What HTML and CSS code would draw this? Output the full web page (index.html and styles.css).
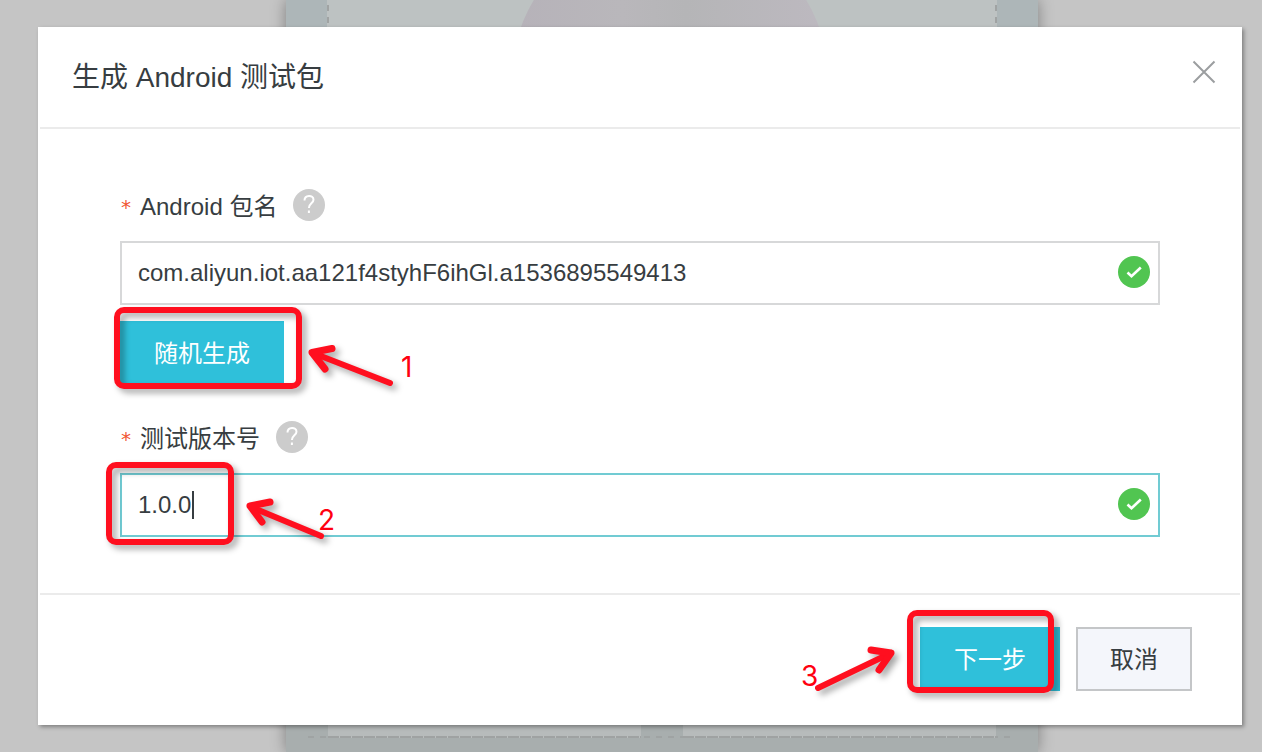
FILE: index.html
```
<!DOCTYPE html>
<html lang="zh-CN">
<head>
    <meta charset="UTF-8">
    <meta name="viewport" content="width=device-width, initial-scale=1.0">
    <title>生成 Android 测试包</title>
    <link rel="stylesheet" href="styles.css">
</head>
<body>
    <div class="scene">
        <div class="scene-top">
            <svg class="ball" viewBox="0 0 320 48" aria-hidden="true">
                <defs>
                    <linearGradient id="ballFill">
                        <stop offset="0" stop-color="#b6b2b9"/>
                        <stop offset="0.35" stop-color="#b9b7bb"/>
                        <stop offset="0.55" stop-color="#b5b5b7"/>
                        <stop offset="1" stop-color="#bdb9c0"/>
                    </linearGradient>
                </defs>
                <circle cx="168" cy="82" r="159" fill="url(#ballFill)"/>
            </svg>
        </div>
        <div class="scene-bottom">
            <div class="slot"></div>
            <div class="slot"></div>
        </div>
    </div>

    <div class="dialog" role="dialog" aria-labelledby="title">
        <div class="dialog-header">
            <h2 id="title">生成 Android 测试包</h2>
            <button class="close" type="button" aria-label="关闭">
                <svg width="24" height="24" viewBox="0 0 24 24"><path d="M1.5 1.5 22.5 22.5M22.5 1.5 1.5 22.5"/></svg>
            </button>
        </div>

        <form class="dialog-body">
            <div class="label-row">
                <span class="required">*</span>
                <label for="package_name">Android 包名</label>
                <svg class="help" viewBox="0 0 32 32"><circle cx="16" cy="16" r="16"/><path d="M11.5 11.5c0-6 9-6 9-.8 0 3.6-4.6 3.8-4.6 8.3"/><path d="M15.9 21.5v2.5"/></svg>
            </div>
            <div class="field">
                <input type="text" id="package_name" value="com.aliyun.iot.aa121f4styhF6ihGl.a1536895549413">
                <svg class="ok" viewBox="0 0 32 32"><circle cx="16" cy="16" r="16"/><path d="M9.5 16.5 13.5 20.3 22.8 11.5"/></svg>
            </div>
            <div class="marked random">
                <button class="primary" type="button">随机生成</button>
                <svg class="mark mark-random" width="330" height="110">
                    <rect x="17" y="10" width="182" height="76" rx="7"/>
                    <g>
                        <path d="M290 83 213 53"/>
                        <path class="head" d="M232 48.500 212 52.500 225 69"/>
                    </g>
                    <text x="301" y="77">1</text>
                </svg>
            </div>

            <div class="label-row">
                <span class="required">*</span>
                <label for="version">测试版本号</label>
                <svg class="help" viewBox="0 0 32 32"><circle cx="16" cy="16" r="16"/><path d="M11.5 11.5c0-6 9-6 9-.8 0 3.6-4.6 3.8-4.6 8.3"/><path d="M15.9 21.5v2.5"/></svg>
            </div>
            <div class="field active marked">
                <input type="text" id="version" value="1.0.0">
                <span class="caret"></span>
                <svg class="ok" viewBox="0 0 32 32"><circle cx="16" cy="16" r="16"/><path d="M9.5 16.5 13.5 20.3 22.8 11.5"/></svg>
                <svg class="mark mark-version" width="330" height="110">
                    <rect x="9" y="12" width="122" height="77" rx="7"/>
                    <g>
                        <path d="M221 83 151 54"/>
                        <path class="head" d="M170 49 150 53 162 69"/>
                    </g>
                    <text x="218" y="77">2</text>
                </svg>
            </div>
        </form>

        <div class="dialog-footer">
            <div class="marked">
                <button class="primary" type="button">下一步</button>
                <svg class="mark mark-next" width="280" height="110">
                    <rect x="120" y="13" width="141" height="77" rx="7"/>
                    <g>
                        <path d="M28 88 101 53"/>
                        <path class="head" d="M81 50 101 53 89 70"/>
                    </g>
                    <text x="11" y="86">3</text>
                </svg>
            </div>
            <button class="cancel" type="button">取消</button>
        </div>
    </div>
</body>
</html>
```
FILE: styles.css
```
* {
    box-sizing: border-box;
}
body {
    margin: 0;
    display: flow-root;
    position: relative;
    min-height: 100vh;
    background-color: #c5c5c5;
    color: #373d41;
    font-family: "Liberation Sans", "Noto Sans CJK SC", sans-serif;
    font-size: 24px;
    overflow-x: hidden;
}

/* page behind the dialog */
.scene {
    position: absolute;
    top: 0;
    bottom: 0;
    left: calc(50% - 345px);
    width: 752px;
    display: flex;
    flex-direction: column;
    justify-content: space-between;
    background: linear-gradient(#adb6b8 50%, #a8aeae 50%);
    box-shadow: 0 0 14px rgba(0, 0, 0, 0.35);
    overflow: hidden;
}
.scene-top {
    height: 48px;
    margin: 0 41px;
    background:
        repeating-linear-gradient(transparent 0 5px, #a0a3a3 5px 11px, transparent 11px 12px) left / 2px 100% no-repeat,
        repeating-linear-gradient(transparent 0 5px, #a0a3a3 5px 11px, transparent 11px 12px) right / 2px 100% no-repeat,
        #bdc2c2;
}
.ball {
    display: block;
    width: 320px;
    height: 48px;
    margin: 0 auto;
    overflow: visible;
}
.scene-bottom {
    display: flex;
    gap: 42px;
    margin: 0 22px 14px;
    padding: 0 20px;
    background: repeating-linear-gradient(90deg, #9fa3a3 0 6px, transparent 6px 12px) bottom / 100% 2px no-repeat;
}
.slot {
    flex: 1;
    height: 48px;
    background:
        repeating-linear-gradient(90deg, #9fa2a2 0 11px, #b9bdbd 11px 12px) bottom / 100% 2px no-repeat,
        #b7bbbb;
}

/* dialog */
.dialog {
    position: relative;
    margin: 27px 20px 27px 38px;
    background-color: #fff;
    box-shadow: 2px 2px 4px rgba(0, 0, 0, 0.35);
}
.dialog-header {
    display: flex;
    justify-content: space-between;
    align-items: flex-start;
    height: 102px;
    margin: 0 2px;
    padding: 30px 24px 0 32px;
    border-bottom: 2px solid #ebebeb;
}
.dialog-header h2 {
    margin: 0;
    font-size: 28px;
    font-weight: normal;
    line-height: 42px;
}
.close {
    width: 24px;
    height: 24px;
    margin-top: 3px;
    padding: 0;
    border: none;
    background: none;
    cursor: pointer;
}
.close svg {
    display: block;
    fill: none;
    stroke: #9b9ea0;
    stroke-width: 2;
}
.dialog-body {
    padding: 60px 82px 56px;
}
.label-row {
    display: flex;
    align-items: flex-start;
    height: 32px;
    margin-bottom: 20px;
}
.label-row label,
.required {
    line-height: 36px;
}
.required {
    width: 20px;
    color: #f15533;
    font-family: "DejaVu Sans Mono", monospace;
    font-size: 20px;
}
.help {
    width: 32px;
    height: 32px;
    margin-left: 16px;
}
.help circle {
    fill: #ccc;
}
.help path {
    fill: none;
    stroke: #fff;
    stroke-width: 2;
}
.field {
    position: relative;
}
.field input {
    display: block;
    width: 100%;
    height: 64px;
    padding: 0 60px 0 16px;
    border: 2px solid #d7d8d9;
    border-radius: 0;
    outline: none;
    background-color: #fff;
    color: #373d41;
    font-family: inherit;
    font-size: 24px;
}
.field.active input {
    border-color: #71cbd3;
}
.ok {
    position: absolute;
    top: 15px;
    right: 10px;
    width: 32px;
    height: 32px;
}
.ok circle {
    fill: #51c551;
}
.ok path {
    fill: none;
    stroke: #fff;
    stroke-width: 2.6;
}
.caret {
    position: absolute;
    top: 18px;
    left: 72px;
    width: 2px;
    height: 28px;
    background-color: #373d41;
}
.random {
    margin: 16px 0 36px;
}
.primary,
.cancel {
    display: block;
    height: 64px;
    padding: 0 34px 4px;
    border: none;
    font-family: inherit;
    font-size: 24px;
    cursor: pointer;
}
.primary {
    background-color: #2fc0da;
    color: #fff;
}
.cancel {
    padding: 0 32px 4px;
    border: 2px solid #c4c6c8;
    background-color: #f4f6fb;
    color: #373d41;
}
.dialog-footer {
    display: flex;
    justify-content: flex-end;
    gap: 16px;
    margin: 0 2px;
    padding: 32px 48px 34px;
    border-top: 2px solid #ebebeb;
}

/* red step marks */
.marked {
    position: relative;
    width: fit-content;
}
.field.marked {
    width: auto;
}
.mark {
    position: absolute;
    overflow: visible;
    pointer-events: none;
}
.mark rect,
.mark path {
    fill: none;
    stroke: #ff0f1f;
    stroke-width: 6;
    stroke-linecap: round;
    stroke-linejoin: round;
}
.mark rect,
.mark g {
    filter: drop-shadow(4px 4px 3px rgba(0, 0, 0, 0.35));
}
.mark .head {
    stroke-width: 7;
}
.mark text {
    fill: #ff0010;
    font-family: Inter, sans-serif;
    font-size: 28px;
}
.mark-random {
    top: -21px;
    left: -20px;
}
.mark-version {
    top: -20px;
    left: -20px;
}
.mark-next {
    top: -27px;
    left: -130px;
}
```
